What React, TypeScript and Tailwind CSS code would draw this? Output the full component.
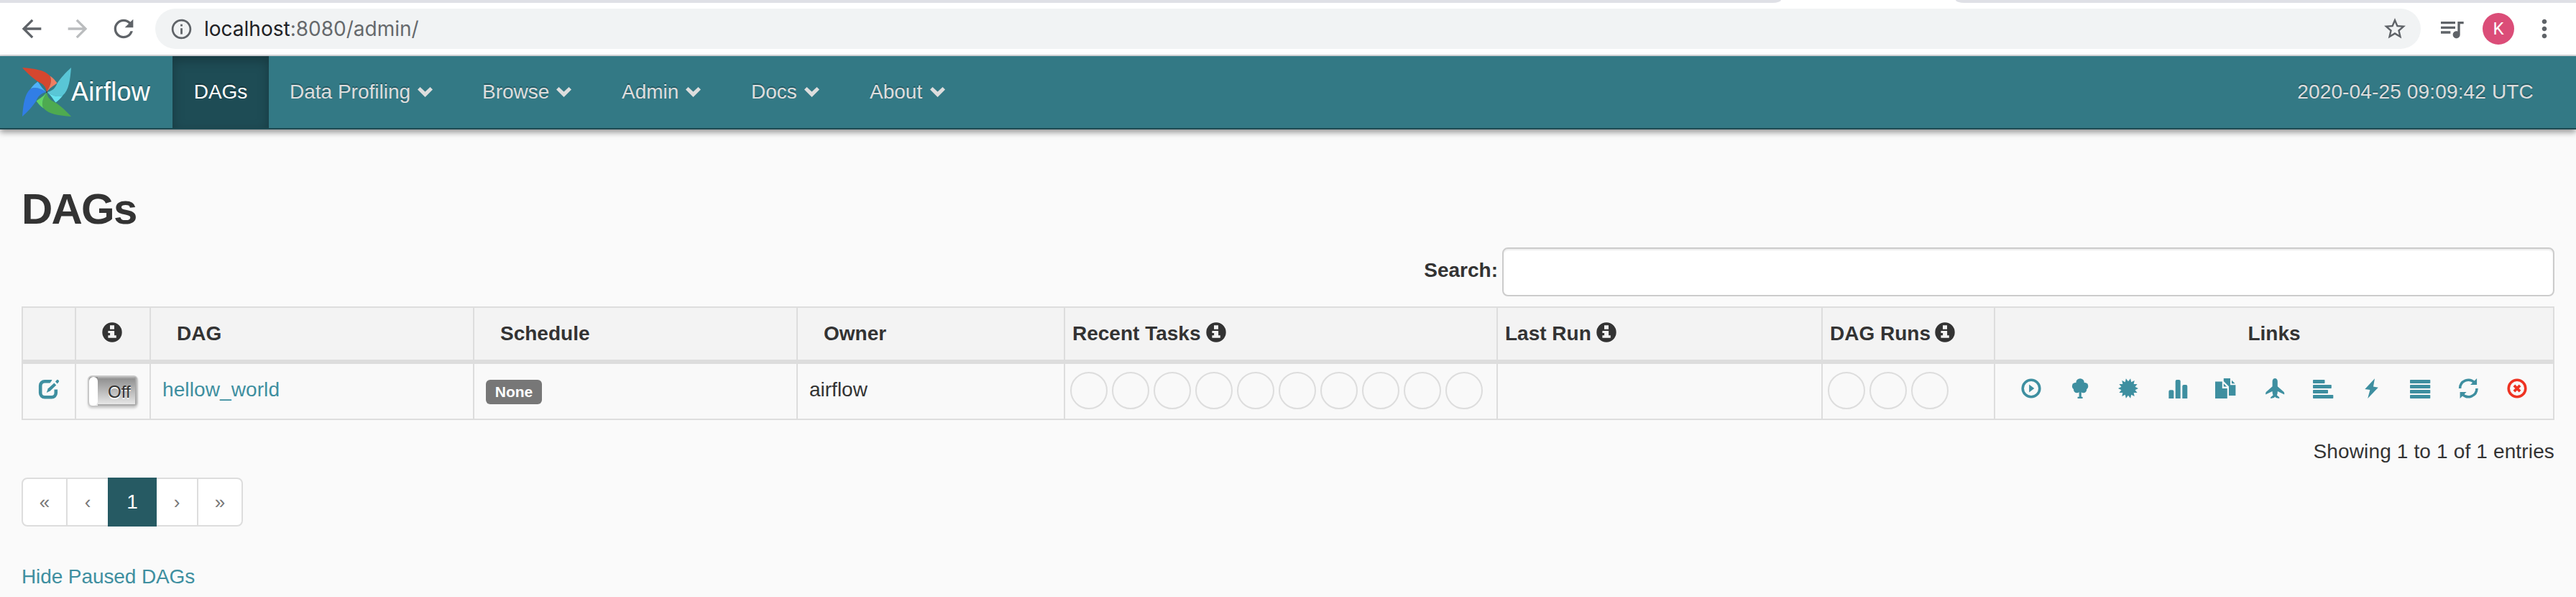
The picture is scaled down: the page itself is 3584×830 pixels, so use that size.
import type { ReactNode } from 'react';
import {
  MdArrowBack,
  MdArrowForward,
  MdInfoOutline,
  MdMoreVert,
  MdQueueMusic,
  MdRefresh,
  MdStarBorder,
} from 'react-icons/md';

function Glyph({ children, className = '' }: { children: ReactNode; className?: string }) {
  return (
    <svg viewBox="0 0 28 28" className={`size-7 shrink-0 overflow-visible ${className}`} fill="currentColor">
      {children}
    </svg>
  );
}

const InfoSign = ({ className = '' }: { className?: string }) => (
  <Glyph className={className}>
    <path
      fillRule="evenodd"
      d="M14 .3a13.7 13.7 0 1 1 0 27.4a13.7 13.7 0 0 1 0-27.4zM11 4.3v5.4h6V4.3zM8.4 12v3h2.7v3.3H8.4v3.4h11.4v-3.4h-2.7V12z"
    />
  </Glyph>
);

const certificatePoints = Array.from({ length: 28 }, (_, i) => {
  const radius = i % 2 === 0 ? 14 : 9.8;
  const angle = ((i + 1) * Math.PI) / 14;
  return `${(14 + radius * Math.sin(angle)).toFixed(2)},${(14 - radius * Math.cos(angle)).toFixed(2)}`;
}).join(' ');

const linkIcons: ReactNode[] = [
  <Glyph key="trigger">
    <circle cx="14" cy="14" r="11.8" fill="none" stroke="currentColor" strokeWidth="3.6" />
    <path d="M11.1 8.6L18.3 14L11.1 19.4z" />
  </Glyph>,
  <Glyph key="tree">
    <circle cx="14.1" cy="5.9" r="5.7" />
    <circle cx="7.9" cy="10.9" r="5" />
    <circle cx="20.3" cy="10.9" r="5" />
    <circle cx="9.6" cy="15.7" r="4.6" />
    <circle cx="18.6" cy="15.7" r="4.6" />
    <path d="M9 8h10v11H9zM12.6 18h3.2v7.8h1.8V28h-7v-2.2h2z" />
  </Glyph>,
  <Glyph key="graph">
    <polygon points={certificatePoints} />
  </Glyph>,
  <Glyph key="duration">
    <path d="M2.4 28v-9.7a2 2 0 0 1 2-2h3a2 2 0 0 1 2 2V28zM11.7 28V4a2 2 0 0 1 2-2h3a2 2 0 0 1 2 2v24zM21.3 28V11a2 2 0 0 1 2-2h3a2 2 0 0 1 2 2v17z" />
  </Glyph>,
  <Glyph key="tries">
    <path d="M0 4.6h9.8V14h7v14H0zM11.8 7.2l4.4 4.4h-4.4zM11.8 0H21v9.3h7.4V24H19V11.3L11.8 4zM23 2.8l4.6 4.4H23z" />
  </Glyph>,
  <Glyph key="landing">
    <path d="M15.2 0C17.4 0 18.8 1.8 18.8 4.2V11.3L27.6 19Q28.4 19.9 28.2 22.6L18.9 17.9Q18.8 21.5 17.9 23.6L21.2 26.2V28L16.6 27L15.2 25.4L13.8 27L9.2 28V26.2L12.5 23.6Q11.6 21.5 11.5 17.9L2.2 22.6Q2 19.9 2.8 19L11.6 11.3V4.2C11.6 1.8 13 0 15.2 0z" />
  </Glyph>,
  <Glyph key="gantt">
    <rect y="2" width="16.5" height="5" rx=".8" />
    <rect y="9" width="25.8" height="5" rx=".8" />
    <rect y="16" width="21" height="5" rx=".8" />
    <rect y="23" width="28.3" height="5" rx=".8" />
  </Glyph>,
  <Glyph key="code">
    <path d="M19 .3L5.3 15L12.4 16.1L9.2 28L23.8 12.7L17 11.6z" />
  </Glyph>,
  <Glyph key="logs">
    <rect y="2" width="28.3" height="5" rx=".8" />
    <rect y="9" width="28.3" height="5" rx=".8" />
    <rect y="16" width="28.3" height="5" rx=".8" />
    <rect y="23" width="28.3" height="5" rx=".8" />
  </Glyph>,
  <Glyph key="refresh">
    <path
      d="M2.6 14A11.7 11.7 0 0 1 22.6 5.8M26 14A11.7 11.7 0 0 1 6 22.2"
      fill="none"
      stroke="currentColor"
      strokeWidth="3.5"
    />
    <path d="M26.1 0V9H17zM2.6 28V19H11.6z" />
  </Glyph>,
  <Glyph key="delete" className="text-[#ee3322]">
    <circle cx="14" cy="14" r="11.8" fill="none" stroke="currentColor" strokeWidth="3.6" />
    <path d="M9.9 9.9L18.1 18.1M18.1 9.9L9.9 18.1" stroke="currentColor" strokeWidth="3.8" />
  </Glyph>,
];

const blades = [
  { turn: 0, dark: '#d5472f', light: '#ef7e62' },
  { turn: 90, dark: '#59c6d6', light: '#66e2ef' },
  { turn: 180, dark: '#4eaa50', light: '#62d467' },
  { turn: 270, dark: '#317ee6', light: '#4fb1fb' },
];

function Logo() {
  return (
    <svg viewBox="0 0 68 68" className="size-[68px] shrink-0">
      {blades.map((blade) => (
        <g key={blade.turn} transform={`rotate(${blade.turn} 34 34)`}>
          <path d="M0 0C17 1.5 31 3 38.5 11.5C42.5 19 38 27 34 34C33 26 28 22 22 19.5C15 15 6 7 0 0z" fill={blade.dark} />
          <path d="M38.5 11.5C43 14.5 46 18 48.5 21.5C43 26 38 28 34 34C38 27 42.5 19 38.5 11.5z" fill={blade.light} />
        </g>
      ))}
      <circle cx="34" cy="34" r="1.2" fill="#3f4a4c" />
    </svg>
  );
}

function BrowserBar() {
  return (
    <>
      <div className="flex h-1 justify-between bg-white">
        <div className="w-[2478px] rounded-br-[12px_4px] bg-[#dfe0e6]" />
        <div className="w-[863px] rounded-bl-[12px_4px] bg-[#dfe0e6]" />
      </div>
      <div className="flex h-[74px] items-center border-b-2 border-[#dadbdf] bg-white text-[#5f6368]">
        <MdArrowBack className="ml-6 size-10" />
        <MdArrowForward className="ml-6 size-10 text-[#babcbe]" />
        <MdRefresh className="ml-6 size-10" />
        <div className="ml-6 flex h-14 w-[3152px] items-center rounded-full bg-[#f1f3f4] pr-[18px] pl-5">
          <MdInfoOutline className="size-[33px]" />
          <span className="ml-[15px] font-['Inter','Liberation_Sans',sans-serif] text-[28px] leading-10 text-[#66696c]">
            <span className="text-[#202124]">localhost</span>:8080/admin/
          </span>
          <MdStarBorder className="ml-auto size-9" />
        </div>
        <MdQueueMusic className="ml-[23px] size-10" />
        <div className="ml-[23px] flex size-11 items-center justify-center rounded-full bg-[#db4d78] font-['Roboto',sans-serif] text-2xl text-white">
          K
        </div>
        <MdMoreVert className="ml-[22px] size-10" />
      </div>
    </>
  );
}

const menus = [
  { label: 'Data Profiling', item: 'w-[268px]', text: 'w-[178px]' },
  { label: 'Browse', item: 'w-[194px]', text: 'w-[103px]' },
  { label: 'Admin', item: 'w-[180px]', text: 'w-[89px]' },
  { label: 'Docs', item: 'w-[165px]', text: 'w-[74px]' },
  { label: 'About', item: 'w-[170px]', text: 'w-[84px]' },
];

function NavBar() {
  return (
    <nav className="relative flex h-[102px] items-center border-b-2 border-[#1e4a52] bg-[#337985] pr-[59px] text-[28px] leading-10 text-[#dddddd] shadow-[0_4px_8px_rgba(0,0,0,0.4)] [text-shadow:0_-2px_0_rgba(0,0,0,0.25)]">
      <div className="flex w-60 items-center pl-[31px] text-4xl leading-10 text-white">
        <Logo />
        <span className="tracking-[0.3px]">Airflow</span>
      </div>
      <a className="flex h-full w-[134px] items-center justify-center bg-[#1e4c55] text-white shadow-[inset_0_6px_16px_rgba(0,0,0,0.25)]">
        DAGs
      </a>
      <div className="flex pl-[29px]">
        {menus.map((menu) => (
          <a key={menu.label} className={`flex items-center whitespace-nowrap ${menu.item}`}>
            <span className={menu.text}>{menu.label}</span>
            <svg viewBox="0 0 21 16" className="h-4 w-[21px]" fill="currentColor">
              <path d="M0 4.5L3.5 1L10.5 7.5L17.5 1L21 4.5L10.5 15z" />
            </svg>
          </a>
        ))}
      </div>
      <span className="ml-auto tracking-[0.15px]">2020-04-25 09:09:42 UTC</span>
    </nav>
  );
}

const columns = 'grid grid-cols-[74px_104px_450px_450px_372px_602px_452px_240px_776px]';
const cell = 'flex items-center border-r-2 border-[#dddddd] last:border-r-0';

function Circles({ count }: { count: number }) {
  return (
    <div className="flex gap-1.5 pb-0.5">
      {Array.from({ length: count }, (_, i) => (
        <div key={i} className="size-[52px] rounded-full border-2 border-[#dddddd]" />
      ))}
    </div>
  );
}

function DagTable() {
  return (
    <div className="mt-3.5 border-2 border-[#dddddd]">
      <div className={`${columns} h-[78px] border-b-6 border-[#dddddd] bg-[#f3f3f3] font-bold`}>
        <div className={cell} />
        <div className={`${cell} justify-center pr-0.5 pb-1`}>
          <InfoSign />
        </div>
        <div className={`${cell} pl-9`}>DAG</div>
        <div className={`${cell} pl-9`}>Schedule</div>
        <div className={`${cell} pl-9`}>Owner</div>
        <div className={`${cell} gap-2 pl-2.5`}>
          Recent Tasks <InfoSign className="mb-1" />
        </div>
        <div className={`${cell} pl-2.5`}>
          <span className="mr-[7px]">Last Run</span> <InfoSign className="mb-1" />
        </div>
        <div className={`${cell} pl-2.5`}>
          <span className="mr-1.5">DAG Runs</span> <InfoSign className="mb-1" />
        </div>
        <div className={`${cell} justify-center`}>Links</div>
      </div>
      <div className={`${columns} h-[76px] bg-[#f9f9f9]`}>
        <div className={`${cell} pb-1.5 pl-[21px] text-[#3e8fa0]`}>
          <Glyph>
            <path
              d="M19.5 3.2H9.2A6 6 0 0 0 3.2 9.2V19.3A6 6 0 0 0 9.2 25.3H18.8A6 6 0 0 0 24.8 19.3V14.5"
              fill="none"
              stroke="currentColor"
              strokeWidth="4.6"
            />
            <path d="M20.5 2L27 8.5L17.5 16L11.5 18.5L13.5 12z" fill="#f9f9f9" stroke="#f9f9f9" strokeWidth="2.4" />
            <path d="M22.4 5.4L25.2 8.4L16.8 16.4L11.8 19L13.8 13.2z" />
            <path d="M24 3.6L26 1.2Q27 .2 28.3 1.4Q29.8 2.7 28.8 4L26.8 6.5z" />
          </Glyph>
        </div>
        <div className={`${cell} pl-4`}>
          <div className="flex h-11 w-[70px] overflow-hidden rounded-md border-2 border-[#c8c8c8] bg-linear-to-b from-[#8c8c8c] to-[#ebebeb] shadow-[0_2px_3px_rgba(0,0,0,0.15)]">
            <div className="w-3 shrink-0 rounded-md bg-white" />
            <div className="flex flex-1 items-center border-y-2 border-r-2 border-[#aaaaaa] pt-0.5 pl-3.5 text-2xl leading-8 [text-shadow:0_2px_0_#ffffff]">
              Off
            </div>
          </div>
        </div>
        <div className={`${cell} pb-1 pl-4 tracking-[0.1px] text-[#3e8fa0]`}>hellow_world</div>
        <div className={`${cell} pl-4`}>
          <span className="mt-0.5 flex h-[34px] w-[78px] items-center justify-center rounded-md bg-[#777777] text-[21px] font-bold text-white">
            None
          </span>
        </div>
        <div className={`${cell} pb-1 pl-4`}>airflow</div>
        <div className={`${cell} pl-[7px]`}>
          <Circles count={10} />
        </div>
        <div className={cell} />
        <div className={`${cell} pl-[7px]`}>
          <Circles count={3} />
        </div>
        <div className={`${cell} justify-between pr-9 pb-2 pl-9 text-[#3e8fa0]`}>{linkIcons}</div>
      </div>
    </div>
  );
}

export default function App() {
  return (
    <div className="h-[830px] w-[3584px] overflow-hidden bg-[#fafafa] font-['Liberation_Sans',Arial,sans-serif] text-[28px] leading-10 text-[#333333]">
      <BrowserBar />
      <NavBar />
      <main className="px-[30px] pt-[78px]">
        <h2 className="text-[60px] leading-[66px] font-bold tracking-[-1.8px]">DAGs</h2>
        <div className="mt-5 flex items-center justify-end">
          <label className="mr-1.5 pb-1 font-bold">Search:</label>
          <input className="h-[68px] w-[1464px] rounded-lg border-2 border-[#cccccc] bg-white shadow-[inset_0_2px_2px_rgba(0,0,0,0.075)]" />
        </div>
        <DagTable />
        <div className="mt-6 text-right tracking-[0.15px]">Showing 1 to 1 of 1 entries</div>
        <div className="mt-4 flex h-[68px] w-[308px] rounded-lg border-2 border-[#dddddd] bg-white text-center text-[26px] leading-[64px] text-[#777777]">
          <span className="w-[62px] border-r-2 border-[#dddddd]">«</span>
          <span className="w-14">‹</span>
          <span className="-my-0.5 w-[68px] bg-[#265a63] text-[28px] leading-[68px] text-white">1</span>
          <span className="w-[58px] border-r-2 border-[#dddddd]">›</span>
          <span className="flex-1">»</span>
        </div>
        <a className="mt-[50px] block tracking-[-0.1px] text-[#3e8fa0]">Hide Paused DAGs</a>
      </main>
    </div>
  );
}
